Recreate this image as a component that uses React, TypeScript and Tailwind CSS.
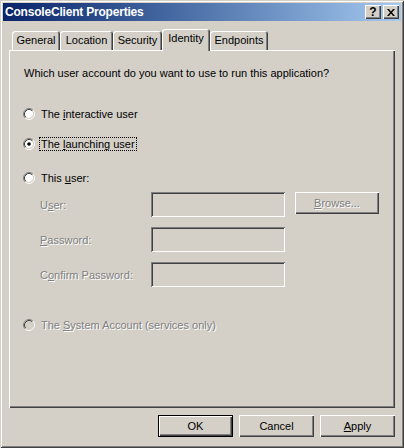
import React from 'react';

const raised = 'shadow-[inset_1px_1px_#ffffff,inset_-1px_-1px_#404040,inset_-2px_-2px_#808080]';
const sunken = 'shadow-[inset_1px_1px_#808080,inset_-1px_-1px_#ffffff,inset_2px_2px_#404040,inset_-2px_-2px_#d4d0c8]';
const disabledText = 'text-[#808080] [text-shadow:1px_1px_0_#ffffff]';

const Radio: React.FC<{ checked?: boolean; disabled?: boolean }> = ({ checked, disabled }) => (
    <svg width="12" height="12" viewBox="0 0 12 12" className="shrink-0">
        <circle cx="6" cy="6" r="4.2" fill={disabled ? '#d4d0c8' : '#ffffff'} />
        <path d="M2.11 9.89 A5.5 5.5 0 0 1 9.89 2.11" stroke="#808080" fill="none" />
        <path d="M9.89 2.11 A5.5 5.5 0 0 1 2.11 9.89" stroke="#ffffff" fill="none" />
        <path d="M2.82 9.18 A4.5 4.5 0 0 1 9.18 2.82" stroke="#404040" fill="none" />
        <path d="M9.18 2.82 A4.5 4.5 0 0 1 2.82 9.18" stroke="#d4d0c8" fill="none" />
        {checked && <circle cx="6" cy="6" r="1.8" fill="#000000" />}
    </svg>
);

const RadioRow: React.FC<{ children: React.ReactNode; checked?: boolean; disabled?: boolean; focused?: boolean; className?: string }> = ({ children, checked, disabled, focused, className }) => (
    <div className={`flex items-center h-[16px] pl-[14px] ${className || ''}`}>
        <Radio checked={checked} disabled={disabled} />
        <span className={`ml-[4px] px-[1px] h-[14px] leading-[12px] border border-dotted ${focused ? 'border-black' : 'border-transparent'} ${disabled ? disabledText : ''}`}>
            {children}
        </span>
    </div>
);

const FieldRow: React.FC<{ label: React.ReactNode; browse?: boolean; className?: string }> = ({ label, browse, className }) => (
    <div className={`flex items-start pl-[31px] ${className || ''}`}>
        <span className={`w-[111px] h-[24px] pt-[3px] flex items-center ${disabledText}`}>{label}</span>
        <div className={`w-[134px] h-[25px] bg-[#d4d0c8] ${sunken}`} />
        {browse && (
            <div className={`ml-[10px] w-[84px] h-[22px] flex items-center justify-center ${raised} ${disabledText}`}>
                <span><u>B</u>rowse...</span>
            </div>
        )}
    </div>
);

const tabs = [
    { name: 'General', w: 'w-[48px]' },
    { name: 'Location', w: 'w-[53px]' },
    { name: 'Security', w: 'w-[49px]' },
    { name: 'Identity', w: 'w-[48px]', active: true },
    { name: 'Endpoints', w: 'w-[58px]' },
];

export default function App() {
    return (
        <div className="w-[404px] h-[448px] bg-[#d4d0c8] p-[3px] flex flex-col text-black text-[11px] shadow-[inset_1px_1px_#d4d0c8,inset_-1px_-1px_#404040,inset_2px_2px_#ffffff,inset_-2px_-2px_#808080]" style={{ fontFamily: '"Liberation Sans", Arial, sans-serif' }}>
            {/* title bar */}
            <div className="h-[18px] flex items-center pl-[2px] pr-[2px] bg-gradient-to-r from-[#0a246a] to-[#a6caf0]">
                <span className="flex-1 text-white font-bold text-[12px] leading-[18px] tracking-[-0.2px]">ConsoleClient Properties</span>
                <div className={`w-[16px] h-[14px] bg-[#d4d0c8] flex items-center justify-center font-bold text-[12px] leading-none ${raised}`}>?</div>
                <div className={`ml-[2px] w-[16px] h-[14px] bg-[#d4d0c8] flex items-center justify-center ${raised}`}>
                    <svg width="8" height="7" viewBox="0 0 8 7">
                        <path d="M0 0h2l2 2.5L6 0h2L5 3.5 8 7H6L4 4.5 2 7H0l3-3.5z" fill="#000" />
                    </svg>
                </div>
            </div>

            <div className="flex-1 flex flex-col px-[6px] pt-[8px] pb-[8px]">
                {/* tabs */}
                <div className="h-[21px] flex items-end pl-[3px]">
                    {tabs.map(t => (
                        <div
                            key={t.name}
                            className={`${t.w} flex items-center justify-center rounded-t-[3px] bg-[#d4d0c8] shadow-[inset_1px_1px_#ffffff,inset_-1px_0_#404040,inset_-2px_0_#808080] ${t.active ? 'relative z-10 h-[22px] -mb-px pb-[3px]' : 'h-[19px]'}`}
                        >
                            {t.name}
                        </div>
                    ))}
                </div>

                {/* panel */}
                <div className={`h-[358px] flex flex-col pt-[16px] ${raised}`}>
                    <div className="h-[14px] leading-[14px] pl-[15px]">Which user account do you want to use to run this application?</div>
                    <RadioRow className="mt-[26px]">The <u>i</u>nteractive user</RadioRow>
                    <RadioRow className="mt-[14px]" checked focused>The <u>l</u>aunching user</RadioRow>
                    <RadioRow className="mt-[18px]">This <u>u</u>ser:</RadioRow>
                    <FieldRow className="mt-[6px]" label={<span>U<u>s</u>er:</span>} browse />
                    <FieldRow className="mt-[10px]" label={<span><u>P</u>assword:</span>} />
                    <FieldRow className="mt-[10px]" label={<span>C<u>o</u>nfirm Password:</span>} />
                    <RadioRow className="mt-[30px]" disabled>The <u>S</u>ystem Account (services only)</RadioRow>
                </div>

                {/* buttons */}
                <div className="mt-[7px] flex justify-end gap-[6px]">
                    <div className="w-[75px] h-[22px] border border-black flex items-center justify-center shadow-[inset_1px_1px_#ffffff,inset_-1px_-1px_#404040,inset_-2px_-2px_#808080]">OK</div>
                    <div className={`w-[75px] h-[22px] flex items-center justify-center ${raised}`}>Cancel</div>
                    <div className={`w-[75px] h-[22px] flex items-center justify-center ${raised}`}><span><u>A</u>pply</span></div>
                </div>
            </div>
        </div>
    );
}
